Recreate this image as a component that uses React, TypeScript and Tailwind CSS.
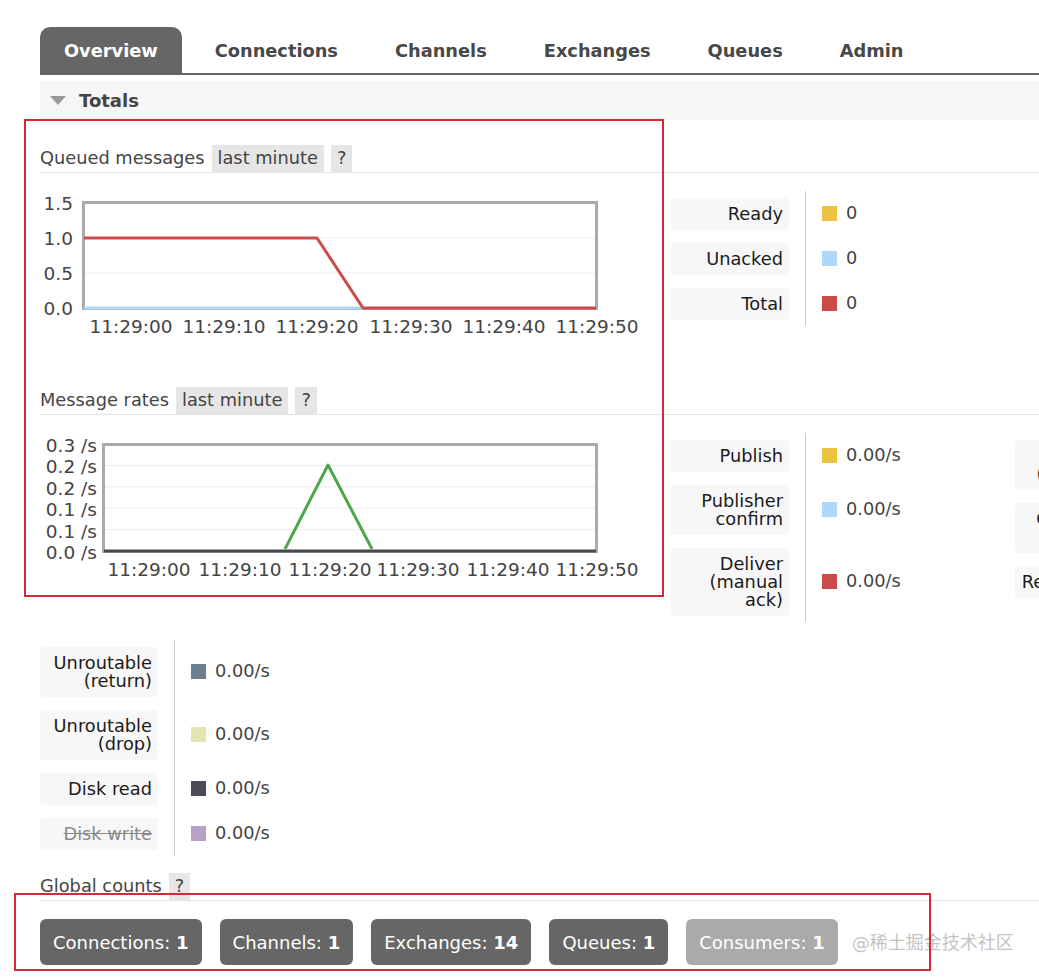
import React from "react";

type LegendItem = {
	label: string;
	swatch: string;
	value: string;
	muted?: boolean;
};

const queuedItems: LegendItem[] = [
	{ label: "Ready", swatch: "bg-[#edc240]", value: "0" },
	{ label: "Unacked", swatch: "bg-[#afd8f8]", value: "0" },
	{ label: "Total", swatch: "bg-[#cb4b4b]", value: "0" },
];

const rateItems: LegendItem[] = [
	{ label: "Publish", swatch: "bg-[#edc240]", value: "0.00/s" },
	{ label: "Publisher confirm", swatch: "bg-[#afd8f8]", value: "0.00/s" },
	{ label: "Deliver (manual ack)", swatch: "bg-[#cb4b4b]", value: "0.00/s" },
];

const rateItems2: LegendItem[] = [
	{ label: "Deliver (auto ack)", swatch: "bg-[#4da74d]", value: "0.00/s" },
	{ label: "Consumer ack", swatch: "bg-[#9440ed]", value: "0.00/s" },
	{ label: "Redelivered", swatch: "bg-[#bd9b33]", value: "0.00/s" },
];

const miscItems: LegendItem[] = [
	{ label: "Unroutable (return)", swatch: "bg-[#6b7f8c]", value: "0.00/s" },
	{ label: "Unroutable (drop)", swatch: "bg-[#e3e6b0]", value: "0.00/s" },
	{ label: "Disk read", swatch: "bg-[#4b4a55]", value: "0.00/s" },
	{ label: "Disk write", swatch: "bg-[#b9a0c6]", value: "0.00/s", muted: true },
];

const counts = [
	{ name: "Connections", n: "1" },
	{ name: "Channels", n: "1" },
	{ name: "Exchanges", n: "14" },
	{ name: "Queues", n: "1" },
];

function Legend({ items }: { items: LegendItem[] }) {
	return (
		<div className="flex flex-col">
			{items.map((it) => (
				<div key={it.label} className="flex">
					<div className="py-[6.5px] pr-[16px]">
						<div
							className={`w-[118px] rounded-[3px] bg-[#f7f7f7] px-[6px] py-[7px] text-right leading-[18px] ${
								it.muted ? "text-[#8a8a8a] line-through" : "text-[#1b1b1b]"
							}`}
						>
							{it.label}
						</div>
					</div>
					<div className="flex w-[210px] items-center border-l border-[#cccccc] pl-[16px]">
						<span className={`mr-[9px] h-[15px] w-[15px] ${it.swatch}`} />
						<span className="text-[#444]">{it.value}</span>
					</div>
				</div>
			))}
		</div>
	);
}

function SectionHeading({ title, badges }: { title: string; badges: string[] }) {
	return (
		<div className="flex h-[28px] items-center border-b border-[#e4e4e4]">
			<span className="text-[#444]">{title}</span>
			{badges.map((b) => (
				<span
					key={b}
					className="ml-[7px] flex h-[27px] items-center bg-[#e6e6e6] px-[6px] text-[#444]"
				>
					{b}
				</span>
			))}
		</div>
	);
}

function QueuedChart() {
	const xs = [91, 184, 277, 371, 464, 557];
	const labels = ["11:29:00", "11:29:10", "11:29:20", "11:29:30", "11:29:40", "11:29:50"];
	const ys = [
		{ t: "1.5", y: 30 },
		{ t: "1.0", y: 65 },
		{ t: "0.5", y: 100 },
		{ t: "0.0", y: 135 },
	];
	return (
		<svg width="631" height="170" className="block">
			<rect x="43.5" y="29.5" width="513" height="106" fill="#fff" stroke="#aaaaaa" strokeWidth="3" />
			<line x1="45" y1="65" x2="555" y2="65" stroke="#ececec" strokeWidth="1" />
			<line x1="45" y1="100" x2="555" y2="100" stroke="#ececec" strokeWidth="1" />
			<polyline points="44,135 323,135" fill="none" stroke="#afd8f8" strokeWidth="3" />
			<polyline
				points="44,65 277,65 323,135 556,135"
				fill="none"
				stroke="#cb4b4b"
				strokeWidth="3"
				strokeLinejoin="round"
			/>
			{ys.map((l) => (
				<text key={l.t + l.y} x="33" y={l.y + 6.5} textAnchor="end" fontSize="18.5" fill="#444">
					{l.t}
				</text>
			))}
			{xs.map((x, i) => (
				<text key={labels[i]} x={x} y="160" textAnchor="middle" fontSize="18.5" fill="#444">
					{labels[i]}
				</text>
			))}
		</svg>
	);
}

function RatesChart() {
	const xs = [109, 200, 290, 378, 468, 557];
	const labels = ["11:29:00", "11:29:10", "11:29:20", "11:29:30", "11:29:40", "11:29:50"];
	const ys = [
		{ t: "0.3 /s", y: 29 },
		{ t: "0.2 /s", y: 50.4 },
		{ t: "0.2 /s", y: 71.8 },
		{ t: "0.1 /s", y: 93.2 },
		{ t: "0.1 /s", y: 114.6 },
		{ t: "0.0 /s", y: 136 },
	];
	return (
		<svg width="631" height="170" className="block">
			<rect x="63.5" y="29.5" width="493" height="107" fill="#fff" stroke="#aaaaaa" strokeWidth="3" />
			{[50.4, 71.8, 93.2, 114.6].map((y) => (
				<line key={y} x1="65" y1={y} x2="555" y2={y} stroke="#ececec" strokeWidth="1" />
			))}
			<polyline points="64,136 556,136" fill="none" stroke="#48484f" strokeWidth="3" />
			<polyline
				points="245,134 288,50 332,134"
				fill="none"
				stroke="#4da74d"
				strokeWidth="3"
				strokeLinejoin="round"
			/>
			{ys.map((l) => (
				<text key={l.y} x="57" y={l.y + 8} textAnchor="end" fontSize="18.5" fill="#444">
					{l.t}
				</text>
			))}
			{xs.map((x, i) => (
				<text key={labels[i]} x={x} y="161" textAnchor="middle" fontSize="18.5" fill="#444">
					{labels[i]}
				</text>
			))}
		</svg>
	);
}

export default function App() {
	const tabs = ["Connections", "Channels", "Exchanges", "Queues", "Admin"];

	return (
		<div className="relative h-[977px] w-[1039px] overflow-hidden bg-white font-['DejaVu_Sans','Noto_Sans_CJK_SC',sans-serif] text-[17.8px]">
			<div className="w-[1500px] pl-[40px] pt-[27px]">
				{/* tabs */}
				<div className="flex gap-[9px] border-b-2 border-[#666]">
					<div className="flex h-[46px] items-center rounded-t-[10px] bg-[#666] px-[24px] pt-[3px] text-[17.8px] font-bold text-white">
						Overview
					</div>
					{tabs.map((t) => (
						<div key={t} className="flex h-[46px] items-center px-[24px] pt-[3px] text-[17.8px] font-bold text-[#484848]">
							{t}
						</div>
					))}
				</div>

				{/* totals bar */}
				<div className="mt-[6px] flex h-[39px] items-center bg-[#f6f6f6]">
					<svg width="16" height="9" className="ml-[10px]">
						<polygon points="0,0 16,0 8,9" fill="#9a9a9a" />
					</svg>
					<span className="ml-[13px] text-[18px] font-bold text-[#444]">Totals</span>
				</div>

				{/* queued messages */}
				<div className="mt-[25px]">
					<SectionHeading title="Queued messages" badges={["last minute", "?"]} />
				</div>
				<div className="flex">
					<div className="w-[631px]">
						<QueuedChart />
					</div>
					<div className="mt-[18px]">
						<Legend items={queuedItems} />
					</div>
				</div>

				{/* message rates */}
				<div className="mt-[44px]">
					<SectionHeading title="Message rates" badges={["last minute", "?"]} />
				</div>
				<div className="flex">
					<div className="w-[631px]">
						<RatesChart />
					</div>
					<div className="mt-[18px] flex">
						<Legend items={rateItems} />
						<Legend items={rateItems2} />
					</div>
				</div>
				<div className="mt-[18px]">
					<Legend items={miscItems} />
				</div>

				{/* global counts */}
				<div className="mt-[17px]">
					<SectionHeading title="Global counts" badges={["?"]} />
				</div>
				<div className="mt-[18px] flex items-center gap-[18px]">
					{counts.map((c) => (
						<div
							key={c.name}
							className="flex h-[46px] items-center rounded-[6px] bg-[#666] px-[13px] text-[18px] text-white"
						>
							{c.name}:&nbsp;<b>{c.n}</b>
						</div>
					))}
					<div className="flex h-[46px] items-center rounded-[6px] bg-[#aaaaaa] px-[13px] text-[18px] text-white">
						Consumers:&nbsp;<b>1</b>
					</div>
					<span className="-ml-[4px] text-[18px] text-[#c4c4c4]">@稀土掘金技术社区</span>
				</div>
			</div>

			{/* annotation boxes */}
			<div className="absolute left-[24px] top-[119px] h-[478px] w-[640px] border-2 border-[#d42a35]" />
			<div className="absolute left-[14px] top-[893px] h-[78px] w-[917px] border-2 border-[#d42a35]" />
		</div>
	);
}
